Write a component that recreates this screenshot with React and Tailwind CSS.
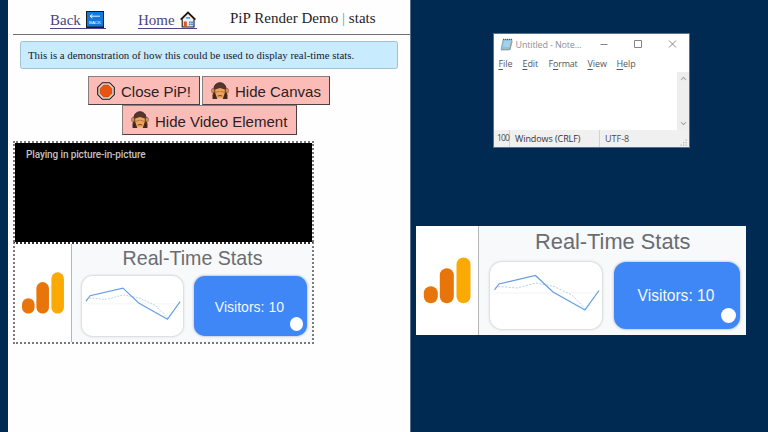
function BackIcon() {
  return (
    <svg className="ml-[5.5px] h-[17px] w-[18px] shrink-0" viewBox="0 0 18 17">
      <rect x="0" y="0" width="18" height="17" fill="#1c1c20" />
      <rect x="1" y="1" width="16" height="14.5" fill="#1379dc" />
      <path d="M4 5.2H14M6.5 3.4L4 5.2L6.5 7" fill="none" stroke="#e8f5ff" strokeWidth="1" />
      <text x="9" y="13.4" textAnchor="middle" fontSize="4.4" fill="#fff" fontFamily="Liberation Sans, sans-serif">BACK</text>
    </svg>
  );
}

function HomeIcon() {
  return (
    <svg className="ml-[5.5px] h-[17px] w-[16px] shrink-0" viewBox="0 0 16 17">
      <path d="M2.2 8V16H14V8L8 2.2Z" fill="#eceff3" stroke="#16161a" strokeWidth="1.1" />
      <path d="M.6 8.6L8 1.2L15.4 8.6" fill="none" stroke="#16161a" strokeWidth="1.5" />
      <path d="M2.6 8.3L8 3L13.4 8.3" fill="none" stroke="#e9a27c" strokeWidth=".8" />
      <rect x="3.8" y="10.5" width="3" height="5.2" fill="#e0511d" />
      <path d="M6.3 6h1.5v1.8H6.3zM8.4 6h1.5v1.8H8.4zM9 10.4h1.6v1.8H9zM11.2 10.4h1.6v1.8h-1.6zM9 12.8h1.6v1.4H9zM11.2 12.8h1.6v1.4h-1.6z" fill="#2a83e0" />
    </svg>
  );
}

function StopIcon() {
  return (
    <svg className="h-[18px] w-[18px] shrink-0" viewBox="0 0 18 18">
      <path d="M5.4.7H12.6L17.3 5.4V12.6L12.6 17.3H5.4L.7 12.6V5.4Z" fill="#e3d3c8" stroke="#1b1716" strokeWidth="1.1" />
      <path d="M6.5 3.1H11.5L14.900 6.500V11.500L11.500 14.900H6.500L3.100 11.500V6.500Z" fill="#e8540f" stroke="#a3441a" strokeWidth=".5" />
    </svg>
  );
}

function MonkeyIcon() {
  return (
    <svg className="h-[18px] w-[18px] shrink-0" viewBox="0 0 18 18">
      <path d="M2.6 9C2.6 3.6 5.2.7 9 .7S15.400 3.600 15.400 9L15.600 12H2.400Z" fill="#55362c" stroke="#2b1b17" strokeWidth=".8" />
      <ellipse cx="2" cy="8.7" rx="1.5" ry="2.4" fill="#d6905a" stroke="#6b4430" strokeWidth=".5" />
      <ellipse cx="16" cy="8.7" rx="1.5" ry="2.4" fill="#d6905a" stroke="#6b4430" strokeWidth=".5" />
      <path d="M4.200 7.600L9 6L13.800 7.600V13.500L11.400 16.200H6.600L4.200 13.500Z" fill="#eea45c" />
      <path d="M3.6 10.6L8.700 9.200M14.400 10.600L9.300 9.200" stroke="#b16b38" strokeWidth=".8" />
      <path d="M1.400 12.500L4.400 11.400L6.300 17H1.600ZM16.600 12.500L13.600 11.400L11.700 17H16.400Z" fill="#44291f" />
      <path d="M6.8 14Q9 13 11.200 14" fill="none" stroke="#6b3b22" strokeWidth=".9" />
    </svg>
  );
}

function PinkButton({ icon, label, className }) {
  return (
    <button
      className={
        "flex items-center border border-t-[#8c7c7b] border-l-[#8c7c7b] border-r-[#4b3f40] border-b-[#4b3f40] bg-[#fbbcb8] pl-[8px] text-left font-['Liberation_Sans',sans-serif] text-[15px] leading-none whitespace-nowrap text-[#2a2224] " +
        className
      }
    >
      {icon}
      <span className="ml-[6px] pt-[2px]">{label}</span>
    </button>
  );
}

// Sized in em so that the same panel serves the page canvas and the floating window.
function StatsPanel({ className }) {
  return (
    <div className={"flex bg-[#f8f9fb] font-['Liberation_Sans',sans-serif] " + className}>
      <div className="flex w-[6.3em] shrink-0 border-r border-[#b4b6b9] bg-white">
        <svg className="h-full w-full" viewBox="0 0 62 109">
          <rect x="7.8" y="60.3" width="14" height="17" rx="7" fill="#e8750a" />
          <rect x="23.8" y="42.3" width="14" height="35" rx="7" fill="#e8750a" />
          <rect x="40.5" y="31.5" width="14" height="45.800" rx="7" fill="#fbaa04" />
        </svg>
      </div>
      <div className="flex flex-1 flex-col pl-[1.15em]">
        <div className="h-[3.55em] pr-[1em]">
          <div className="flex h-[3.25em] items-center justify-center">
            <span className="text-[2.18em] leading-none whitespace-nowrap text-[#696c71]">Real-Time Stats</span>
          </div>
        </div>
        <div className="flex gap-[1.2em]">
          <div className="h-[6.7em] w-[11.2em] rounded-[1.2em] bg-white shadow-[0_0_2px_1px_#d5d7d8]">
            <svg className="h-full w-full" viewBox="0 0 112 67" fill="none">
              <path d="M6 31H109" stroke="#f3f3f3" strokeWidth="1" />
              <path d="M5 26L9 24.5L27 26L46 21L64 24.5L82 33L95 46.5L109 29" stroke="#a9c9e4" strokeWidth=".9" strokeDasharray="2 1.5" />
              <path d="M4.500 28L9 22L45.500 13.500L63 30L95 48L109 28.500" stroke="#629ee2" strokeWidth="1.2" />
            </svg>
          </div>
          <div className="flex h-[6.7em] w-[12.600em] flex-col rounded-[1.2em] bg-[#3f86f6] shadow-[0_0_2px_1px_#c9d0da]">
            <div className="flex h-[4.8em] items-end justify-center pr-[0.2em] pb-[0.6em]">
              <span className="text-[1.56em] leading-none whitespace-nowrap text-[#f4f8ff]">Visitors: 10</span>
            </div>
            <div className="mr-[0.4em] -mt-[0.200em] h-[1.5em] w-[1.5em] self-end rounded-full bg-white" />
          </div>
        </div>
      </div>
    </div>
  );
}

function MenuItem({ before = "", hot, after, className }) {
  return (
    <span className={"shrink-0 " + className}>
      {before}
      <span className="underline underline-offset-[1.500px]">{hot}</span>
      {after}
    </span>
  );
}

function Notepad() {
  return (
    <div className="absolute top-[33px] left-[493px] flex h-[115px] w-[197px] flex-col overflow-hidden border border-[#5b6f86] bg-white font-['Open_Sans','Noto_Sans',sans-serif] text-[9px] text-[#55575b]">
      <div className="flex h-[20px] shrink-0 items-center pl-[5.500px]">
        <svg className="h-[13px] w-[13px] shrink-0" viewBox="0 0 13 13">
          <path d="M3.200 1.500H12L10.200 11.500H1Z" fill="#8dc2e2" stroke="#6f94ab" strokeWidth=".7" />
          <path d="M3.800 4H10.500M3.500 6H10.100M3.100 8H9.700" stroke="#d8eef8" strokeWidth=".7" />
          <path d="M3 1.300H12" stroke="#555f66" strokeWidth="1.300" strokeDasharray="1 1" />
          <path d="M1 12L9.500 11.900L12.300 3.500" fill="none" stroke="#a98c60" strokeWidth=".7" />
        </svg>
        <span className="ml-[3px] w-[72px] shrink-0 text-[9px] leading-none tracking-[-0.160px] whitespace-nowrap text-[#8f9194]">Untitled - Note...</span>
        <svg className="ml-[10px] h-[12px] w-[82px] shrink-0" viewBox="0 0 82 12" fill="none" stroke="#84878a" strokeWidth="1">
          <path d="M2.500 6.500H9.500" />
          <path d="M36.500 2.500H43.500V9.500H36.500Z" />
          <path d="M71 2.500L78 9.500M78 2.500L71 9.500" />
        </svg>
      </div>
      <div className="flex h-[18px] shrink-0 items-center pl-[4.500px] leading-none tracking-[-0.100px]">
        <MenuItem hot="F" after="ile" className="w-[24px]" />
        <MenuItem hot="E" after="dit" className="w-[26px]" />
        <MenuItem before="F" hot="o" after="rmat" className="w-[39px] -tracking-[0.200px]" />
        <MenuItem hot="V" after="iew" className="w-[29px]" />
        <MenuItem hot="H" after="elp" className="w-[24px]" />
      </div>
      <div className="flex min-h-0 flex-1">
        <div className="flex-1 bg-white" />
        <div className="flex w-[12px] flex-col items-center justify-between bg-[#eeeeef] py-[4px]">
          <svg className="h-[5px] w-[7px]" viewBox="0 0 7 5"><path d="M1 4L3.500 1.300L6 4" fill="none" stroke="#a6a7a9" strokeWidth="1.100" /></svg>
          <svg className="h-[5px] w-[7px]" viewBox="0 0 7 5"><path d="M1 1L3.500 3.700L6 1" fill="none" stroke="#a6a7a9" strokeWidth="1.100" /></svg>
        </div>
      </div>
      <div className="flex h-[17px] shrink-0 items-center bg-[#f0f0f0] leading-none text-[#4b4b4e]">
        <div className="flex h-full w-[16px] items-center border-r border-[#d2d2d3] pl-[3px] text-[8.500px] tracking-[-0.900px]">100</div>
        <div className="flex h-full w-[90px] items-center border-r border-[#d2d2d3] pl-[5px] tracking-[-0.080px] whitespace-nowrap text-[#343438]">Windows (CRLF)</div>
        <div className="flex-1 pl-[5px]">UTF-8</div>
        <svg className="mr-[1px] h-[8px] w-[8px] self-end" viewBox="0 0 8 8" fill="#b5b5b6">
          <path d="M5.500.500h1.200v1.200H5.500zM3 3h1.200v1.200H3zM5.500 3h1.200v1.200H5.500zM.500 5.500h1.200v1.200H.500zM3 5.500h1.200v1.200H3zM5.500 5.500h1.200v1.200H5.500z" />
        </svg>
      </div>
    </div>
  );
}

export default function App() {
  return (
    <div className="relative flex h-[432px] w-[768px] overflow-hidden bg-[#002a52] pl-[8px]">
      <main className="flex w-[402.500px] flex-col border-r border-[#57708c] bg-[#fefefe] pl-[5px] font-['Liberation_Serif',serif]">
        <header className="flex h-[35px] shrink-0 items-start border-b border-[#6f7272] text-[15px] text-[#1d1d28]">
          <a className="mt-[11px] ml-[37px] flex h-[17.500px] w-[55.500px] items-center border-b border-[#50438c] leading-none text-[#4b4580]">
            <span className="pt-[2px]">Back</span>
            <BackIcon />
          </a>
          <a className="mt-[11px] ml-[32.500px] flex h-[17.500px] w-[59px] items-center border-b border-[#50438c] leading-none text-[#4b4580]">
            <span className="pt-[2px]">Home</span>
            <HomeIcon />
          </a>
          <h1 className="mt-[11px] ml-[33px] leading-none tracking-[0.030px] whitespace-nowrap">
            PiP Render Demo <span className="text-[#6795c4]">|</span> stats
          </h1>
        </header>
        <div className="mt-[6px] ml-[7px] flex h-[28px] w-[378px] shrink-0 items-center rounded-[2.500px] border border-[#9fc1d5] bg-[#c9ebfe] pl-[7px] text-[10.820px] leading-none whitespace-nowrap text-[#16202c]">
          This is a demonstration of how this could be used to display real-time stats.
        </div>
        <div className="mt-[7px] ml-[75px] flex h-[29px] shrink-0 gap-[2px]">
          <PinkButton icon={<StopIcon />} label="Close PiP!" className="w-[112px]" />
          <PinkButton icon={<MonkeyIcon />} label="Hide Canvas" className="w-[128px]" />
        </div>
        <div className="ml-[109px] flex h-[30px] shrink-0">
          <PinkButton icon={<MonkeyIcon />} label="Hide Video Element" className="w-[174.500px]" />
        </div>
        <div className="mt-[6px] h-[101px] w-[301px] shrink-0 border-2 border-b-0 border-dotted border-[#7a7a7a]">
          <div className="h-full bg-black pt-[7px] pl-[11px] font-['Roboto',sans-serif] text-[10px] leading-none font-medium tracking-[-0.120px] whitespace-nowrap text-[#c4c0c0]">
            Playing in picture-in-picture
          </div>
        </div>
        <div className="h-[102px] w-[301px] shrink-0 border-2 border-dotted border-[#7a7a7a] border-t-[#302a2e]">
          <StatsPanel className="h-[98px] w-[297px] text-[9px]" />
        </div>
      </main>
      <Notepad />
      <div className="absolute top-[226px] left-[415.500px]">
        <StatsPanel className="h-[109px] w-[330px] text-[10px]" />
      </div>
    </div>
  );
}
